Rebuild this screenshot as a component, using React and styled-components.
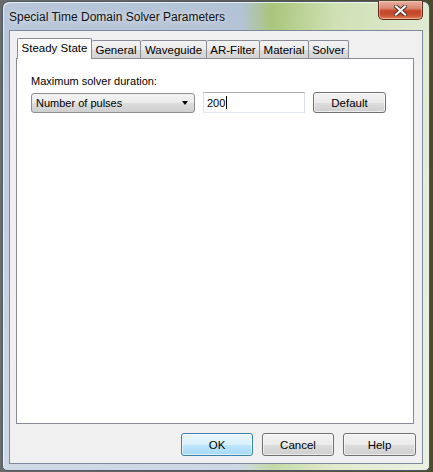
import React from 'react';
import styled, { createGlobalStyle } from 'styled-components';

const GlobalStyle = createGlobalStyle`
  html, body {
    margin: 0;
    padding: 0;
  }
  body {
    width: 433px;
    height: 472px;
    overflow: hidden;
    font-family: 'Liberation Sans', Arial, sans-serif;
    font-size: 11px;
    color: #000;
  }
`;

const Desktop = styled.div`
  width: 433px;
  height: 472px;
  box-sizing: border-box;
  padding: 1px 3px 0 2px;
  background: linear-gradient(90deg, #6b6b6b 0%, #5d5d55 55%, #4a4a2c 100%);
`;

const Window = styled.div`
  height: 470px;
  box-sizing: border-box;
  display: flex;
  flex-direction: column;
  padding: 0 6px 6px 6px;
  border: 1px solid #4d5866;
  border-radius: 7px 7px 5px 5px;
  background:
    linear-gradient(180deg, rgba(255, 255, 255, 0) 0%, rgba(255, 255, 255, 0.35) 100%),
    linear-gradient(90deg, #b7c6d9 0%, #b3c2d5 56%, #a9c57a 63%, #cfe0b3 78%, #e0ead3 100%);
  box-shadow: inset 1px 1px 0 rgba(255, 255, 255, 0.7);
`;

const TitleBar = styled.div`
  height: 28px;
  display: flex;
  justify-content: space-between;
  align-items: flex-start;
`;

const Title = styled.div`
  padding-top: 8px;
  font-size: 12px;
  color: #111;
  text-shadow: 0 0 6px rgba(255, 255, 255, 0.9);
`;

const CloseButton = styled.div`
  width: 45px;
  height: 19px;
  margin-top: -1px;
  box-sizing: border-box;
  display: flex;
  align-items: center;
  justify-content: center;
  border: 1px solid #5e2a20;
  border-top: none;
  border-radius: 0 0 5px 5px;
  background: linear-gradient(180deg, #e9b0a2 0%, #d98a74 40%, #c6452b 55%, #c8512f 80%, #e08a5e 100%);
  box-shadow: inset 0 0 0 1px rgba(255, 220, 200, 0.45);
`;

const Client = styled.div`
  flex: 1;
  display: flex;
  flex-direction: column;
  background: #f0f0f0;
  border: 1px solid #7c8a9b;
`;

const TabStrip = styled.div`
  display: flex;
  align-items: flex-end;
  margin: 7px 8px 0 7px;
  height: 20px;
`;

const Tab = styled.div`
  width: ${(p) => p.$w}px;
  height: ${(p) => (p.$active ? 21 : 18)}px;
  margin-bottom: ${(p) => (p.$active ? -1 : 0)}px;
  position: relative;
  z-index: ${(p) => (p.$active ? 1 : 0)};
  box-sizing: border-box;
  display: flex;
  align-items: ${(p) => (p.$active ? 'flex-start' : 'center')};
  justify-content: center;
  padding-top: ${(p) => (p.$active ? 3 : 1)}px;
  border: 1px solid #898c95;
  border-bottom: none;
  border-left-width: ${(p) => (p.$first || p.$active ? 1 : 0)}px;
  border-radius: 2px 2px 0 0;
  background: ${(p) =>
    p.$active ? '#ffffff' : 'linear-gradient(180deg, #f3f3f3 0%, #ebebeb 50%, #dcdcdc 51%, #d4d4d4 100%)'};
  font-size: 11.5px;
  white-space: nowrap;
`;

const Panel = styled.div`
  flex: 1;
  margin: 0 8px 0 6px;
  padding: 15px 14px;
  background: #ffffff;
  border: 1px solid #898c95;
`;

const Label = styled.div`
  font-size: 11px;
  line-height: 15px;
  margin-bottom: 3px;
`;

const Row = styled.div`
  display: flex;
  align-items: center;
  gap: 8px;
`;

const Combo = styled.div`
  width: 164px;
  height: 20px;
  box-sizing: border-box;
  display: flex;
  align-items: center;
  justify-content: space-between;
  padding: 0 6px 0 4px;
  border: 1px solid #8e8f8f;
  border-radius: 3px;
  background: linear-gradient(180deg, #f2f2f2 0%, #ebebeb 50%, #dddddd 51%, #cfcfcf 100%);
`;

const Arrow = styled.span`
  width: 0;
  height: 0;
  border-left: 3.5px solid transparent;
  border-right: 3.5px solid transparent;
  border-top: 4px solid #000;
`;

const Input = styled.div`
  width: 102px;
  height: 21px;
  box-sizing: border-box;
  display: flex;
  align-items: center;
  padding-left: 3px;
  background: #fff;
  border: 1px solid #dbdfe6;
  border-top-color: #abadb3;
  border-bottom-color: #e3e9ef;
`;

const Caret = styled.span`
  width: 1px;
  height: 13px;
  margin-left: 1px;
  background: #000;
`;

const Button = styled.div`
  width: ${(p) => p.$w || 72}px;
  height: ${(p) => p.$h || 23}px;
  box-sizing: border-box;
  display: flex;
  align-items: center;
  justify-content: center;
  border: 1px solid ${(p) => (p.$primary ? '#3c7fb1' : '#707070')};
  border-radius: 3px;
  background: ${(p) =>
    p.$primary
      ? 'linear-gradient(180deg, #eaf6fd 0%, #d9f0fc 50%, #bee6fd 51%, #a7d9f5 100%)'
      : 'linear-gradient(180deg, #f2f2f2 0%, #ebebeb 50%, #dddddd 51%, #cfcfcf 100%)'};
  box-shadow: inset 0 0 0 1px rgba(255, 255, 255, 0.6);
  font-size: 11.5px;
`;

const ButtonRow = styled.div`
  display: flex;
  justify-content: flex-end;
  gap: 9px;
  padding: 9px 6px 7px 0;
`;

const tabs = [
  { label: 'Steady State', w: 75 },
  { label: 'General', w: 49 },
  { label: 'Waveguide', w: 66 },
  { label: 'AR-Filter', w: 53 },
  { label: 'Material', w: 49 },
  { label: 'Solver', w: 40 },
];

export default function App() {
  return (
    <>
      <GlobalStyle />
      <Desktop>
        <Window>
          <TitleBar>
            <Title>Special Time Domain Solver Parameters</Title>
            <CloseButton>
              <svg width="13" height="11" viewBox="0 0 13 11">
                <path d="M2 1.5 L11 9.5 M11 1.5 L2 9.5" stroke="#4a2a24" strokeWidth="4" strokeLinecap="square" />
                <path d="M2 1.5 L11 9.5 M11 1.5 L2 9.5" stroke="#ffffff" strokeWidth="2.2" strokeLinecap="square" />
              </svg>
            </CloseButton>
          </TitleBar>
          <Client>
            <TabStrip>
              {tabs.map((t, i) => (
                <Tab key={t.label} $w={t.w} $active={i === 0} $first={i === 0}>
                  {t.label}
                </Tab>
              ))}
            </TabStrip>
            <Panel>
              <Label>Maximum solver duration:</Label>
              <Row>
                <Combo>
                  <span>Number of pulses</span>
                  <Arrow />
                </Combo>
                <Input>
                  200
                  <Caret />
                </Input>
                <Button $w={73} $h={21}>Default</Button>
              </Row>
            </Panel>
            <ButtonRow>
              <Button $primary>OK</Button>
              <Button>Cancel</Button>
              <Button $w={73}>Help</Button>
            </ButtonRow>
          </Client>
        </Window>
      </Desktop>
    </>
  );
}
